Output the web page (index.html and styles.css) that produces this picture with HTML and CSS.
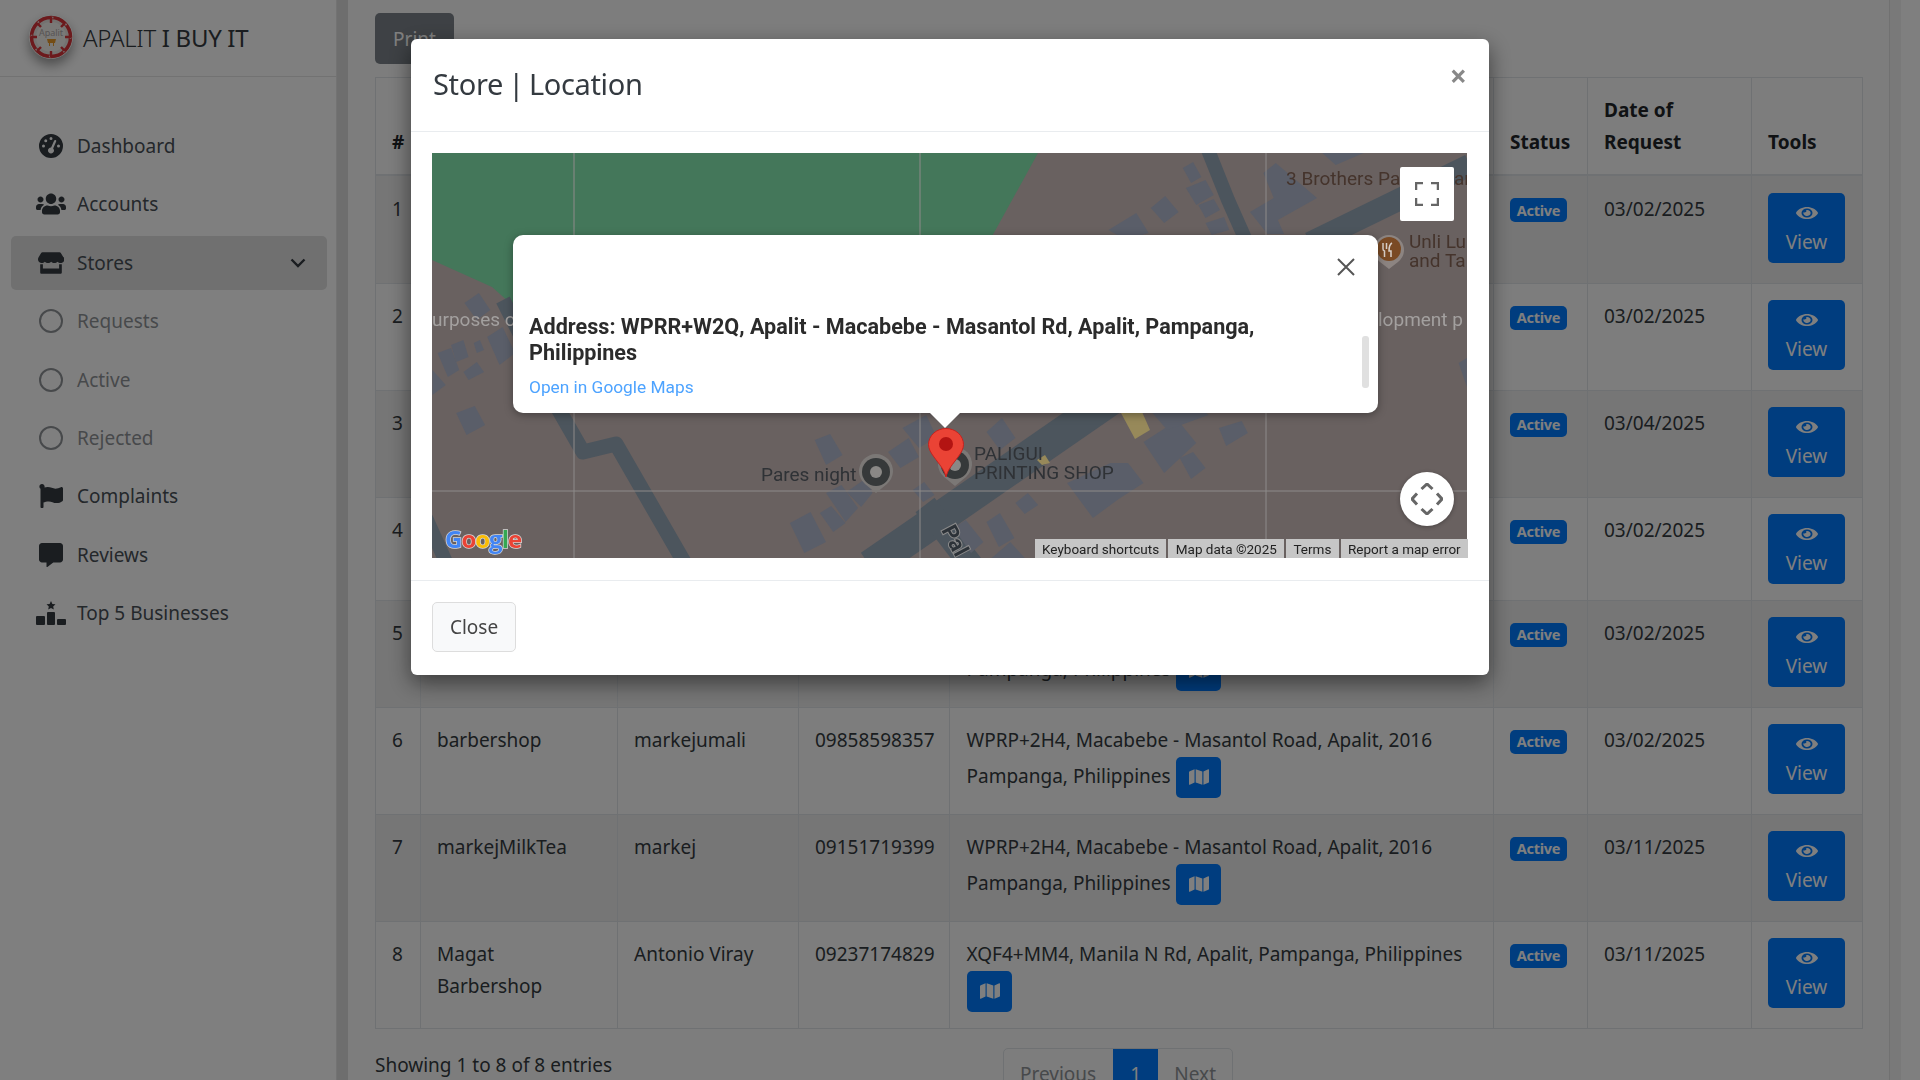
FILE: index.html
```html
<!DOCTYPE html>
<html lang="en">
<head>
  <meta charset="UTF-8">
  <meta name="viewport" content="width=device-width, initial-scale=1.0">
  <title>Stores | Active</title>
  <link rel="stylesheet" href="styles.css">
</head>
<body>

  <div class="app">
    <aside class="sidebar">
      <div class="brand">
        <svg class="brand-logo" viewBox="0 0 44 44">
          <circle cx="22" cy="22" r="21.5" fill="#e8e4e0"/>
          <circle cx="22" cy="22" r="19.5" fill="none" stroke="#d8353a" stroke-width="3.5"/>
          <circle cx="22" cy="22" r="19.5" fill="none" stroke="#e8e4e0" stroke-width="1.6" stroke-dasharray="2 13.3"/>
          <circle cx="22" cy="22" r="15" fill="#f4f2ef"/>
          <path d="M22 2v6M22 36v6M2 22h6M36 22h6M8 8l4 4M32 32l4 4M36 8l-4 4M12 32l-4 4" stroke="#d8353a" stroke-width="2.4"/>
          <text x="22" y="21" class="brand-logo-text">Apalit</text>
          <path d="M18 24h9l-1 4h-7zM20 28h1v3h-1zM24 28h1v3h-1z" fill="#e89a2a"/>
        </svg>
        <span class="brand-text"><span class="brand-light">APALIT</span> I BUY IT</span>
      </div>

      <nav class="nav">
        <a class="nav-item">
          <span class="nav-icon"><svg width="24" height="24" viewBox="0 0 512 512"><path d="M0 256a256 256 0 1 1 512 0A256 256 0 1 1 0 256zM288 96a32 32 0 1 0 -64 0 32 32 0 1 0 64 0zM256 416c35.3 0 64-28.7 64-64c0-17.4-6.9-33.1-18.1-44.6L366 161.7c5.3-12.1-.2-26.3-12.3-31.6s-26.3 .2-31.6 12.3L257.9 288c-.6 0-1.3 0-1.9 0c-35.3 0-64 28.7-64 64s28.7 64 64 64zM176 144a32 32 0 1 0 -64 0 32 32 0 1 0 64 0zM96 288a32 32 0 1 0 0-64 32 32 0 1 0 0 64zm352-32a32 32 0 1 0 -64 0 32 32 0 1 0 64 0z"/></svg></span>
          Dashboard
        </a>
        <a class="nav-item">
          <span class="nav-icon"><svg width="30" height="24" viewBox="0 0 640 512"><path d="M96 224c35.3 0 64-28.7 64-64s-28.7-64-64-64-64 28.7-64 64 28.7 64 64 64zm448 0c35.3 0 64-28.7 64-64s-28.7-64-64-64-64 28.7-64 64 28.7 64 64 64zm32 32h-64c-17.6 0-33.5 7.1-45.1 18.6 40.3 22.1 68.9 62 75.1 109.4h66c17.7 0 32-14.3 32-32v-32c0-35.3-28.7-64-64-64zm-256 0c61.9 0 112-50.1 112-112S381.9 32 320 32 208 82.1 208 144s50.1 112 112 112zm76.8 32h-8.3c-20.8 10-43.9 16-68.5 16s-47.6-6-68.5-16h-8.3C179.6 288 128 339.6 128 403.2V432c0 26.5 21.5 48 48 48h288c26.5 0 48-21.5 48-48v-28.8c0-63.6-51.6-115.2-115.2-115.2zm-223.7-13.4C161.5 263.1 145.6 256 128 256H64c-35.3 0-64 28.7-64 64v32c0 17.7 14.3 32 32 32h65.9c6.3-47.4 34.9-87.3 75.2-109.4z"/></svg></span>
          Accounts
        </a>
        <a class="nav-item active">
          <span class="nav-icon"><svg width="26" height="24" viewBox="0 0 616 512"><path d="M602 118.6L537.1 15C531.3 5.7 521 0 510 0H106C95 0 84.7 5.7 78.9 15L14 118.6c-33.9 54.1-3.9 129.3 59.4 137.9 4.6.6 9.2.9 13.8.9 30.1 0 56.8-13.2 75.1-33.7 18.3 20.5 45.1 33.7 75.1 33.7 30.1 0 56.8-13.2 75.1-33.7 18.3 20.5 45.1 33.7 75.1 33.7 30.1 0 56.8-13.2 75.1-33.7 18.3 20.5 45.1 33.7 75.1 33.7 4.7 0 9.2-.3 13.8-.9 63.3-8.5 93.3-83.7 59.3-137.9zM529.5 288c-10 0-19.9-1.5-29.5-3.8V384H116v-99.8c-9.6 2.2-19.5 3.8-29.5 3.8-6 0-12.1-.4-18-1.2-5.6-.8-11.1-2.1-16.4-3.6V480c0 17.7 14.3 32 32 32h448c17.7 0 32-14.3 32-32V283.2c-5.4 1.6-10.8 2.9-16.4 3.6-6.1.8-12.1 1.2-18.2 1.2z"/></svg></span>
          Stores
          <svg class="nav-caret" width="16" height="10" viewBox="0 0 16 10"><path d="M1.5 1.5L8 8l6.5-6.5" fill="none" stroke="currentColor" stroke-width="2.4"/></svg>
        </a>
        <a class="nav-item sub"><span class="nav-icon"><span class="nav-circle"></span></span>Requests</a>
        <a class="nav-item sub"><span class="nav-icon"><span class="nav-circle"></span></span>Active</a>
        <a class="nav-item sub"><span class="nav-icon"><span class="nav-circle"></span></span>Rejected</a>
        <a class="nav-item">
          <span class="nav-icon"><svg width="24" height="24" viewBox="0 0 512 512"><path d="M349.565 98.783C295.978 98.783 251.721 64 184.348 64c-24.955 0-47.309 4.384-68.045 12.013a55.947 55.947 0 0 0 3.586-23.562C118.117 24.015 94.806 1.206 66.338.048 34.345-1.254 8 24.296 8 56c0 19.026 9.497 35.825 24 45.945V488c0 13.255 10.745 24 24 24h16c13.255 0 24-10.745 24-24v-94.4c28.311-12.064 63.582-22.122 114.435-22.122 53.588 0 97.844 34.783 165.217 34.783 48.169 0 86.667-16.294 122.505-40.858C506.84 359.452 512 349.571 512 339.045v-243.1c0-23.393-24.269-38.87-45.485-29.016-34.338 15.948-76.454 31.854-116.95 31.854z"/></svg></span>
          Complaints
        </a>
        <a class="nav-item">
          <span class="nav-icon"><svg width="24" height="24" viewBox="0 0 512 512"><path d="M448 0H64C28.7 0 0 28.7 0 64v288c0 35.3 28.7 64 64 64h96v84c0 9.8 11.2 15.5 19.1 9.7L304 416h144c35.3 0 64-28.7 64-64V64c0-35.3-28.7-64-64-64z"/></svg></span>
          Reviews
        </a>
        <a class="nav-item">
          <span class="nav-icon"><svg width="30" height="24" viewBox="0 0 30 24"><path d="M15 0l1.4 2.9 3.1.4-2.3 2.2.6 3.1-2.8-1.5-2.8 1.5.6-3.1-2.3-2.2 3.1-.4z"/><rect x="0" y="15" width="9" height="9" rx="1"/><rect x="11" y="11" width="8" height="13" rx="1"/><rect x="21" y="18" width="9" height="6" rx="1"/></svg></span>
          Top 5 Businesses
        </a>
      </nav>
    </aside>

    <main class="content">
      <button class="btn-print">Print</button>

      <table class="data-table">
        <colgroup>
          <col class="col-num"><col class="col-name"><col class="col-owner"><col class="col-contact">
          <col class="col-address"><col class="col-status"><col class="col-date"><col class="col-tools">
        </colgroup>
        <thead>
          <tr>
            <th>#</th><th></th><th></th><th></th><th></th>
            <th>Status</th>
            <th>Date of<br>Request</th>
            <th>Tools</th>
          </tr>
        </thead>
        <tbody>
          <tr class="row-first">
            <td>1</td><td></td><td></td><td></td><td></td>
            <td><span class="badge">Active</span></td>
            <td>03/02/2025</td>
            <td><a class="btn-view"><svg width="22" height="16" viewBox="0 0 576 512" preserveAspectRatio="none"><use href="#eye"/></svg>View</a></td>
          </tr>
          <tr>
            <td>2</td><td></td><td></td><td></td><td></td>
            <td><span class="badge">Active</span></td>
            <td>03/02/2025</td>
            <td><a class="btn-view"><svg width="22" height="16" viewBox="0 0 576 512" preserveAspectRatio="none"><use href="#eye"/></svg>View</a></td>
          </tr>
          <tr>
            <td>3</td><td></td><td></td><td></td><td></td>
            <td><span class="badge">Active</span></td>
            <td>03/04/2025</td>
            <td><a class="btn-view"><svg width="22" height="16" viewBox="0 0 576 512" preserveAspectRatio="none"><use href="#eye"/></svg>View</a></td>
          </tr>
          <tr class="row-short">
            <td>4</td><td></td><td></td><td></td><td></td>
            <td><span class="badge">Active</span></td>
            <td>03/02/2025</td>
            <td><a class="btn-view"><svg width="22" height="16" viewBox="0 0 576 512" preserveAspectRatio="none"><use href="#eye"/></svg>View</a></td>
          </tr>
          <tr>
            <td>5</td><td></td><td></td><td></td>
            <td class="cell-address"><br>Pampanga, Philippines <a class="btn-map"><svg width="20" height="18" viewBox="0 0 576 512"><use href="#map"/></svg></a></td>
            <td><span class="badge">Active</span></td>
            <td>03/02/2025</td>
            <td><a class="btn-view"><svg width="22" height="16" viewBox="0 0 576 512" preserveAspectRatio="none"><use href="#eye"/></svg>View</a></td>
          </tr>
          <tr>
            <td>6</td><td>barbershop</td><td>markejumali</td><td>09858598357</td>
            <td class="cell-address">WPRP+2H4, Macabebe - Masantol Road, Apalit, 2016 Pampanga, Philippines <a class="btn-map"><svg width="20" height="18" viewBox="0 0 576 512"><use href="#map"/></svg></a></td>
            <td><span class="badge">Active</span></td>
            <td>03/02/2025</td>
            <td><a class="btn-view"><svg width="22" height="16" viewBox="0 0 576 512" preserveAspectRatio="none"><use href="#eye"/></svg>View</a></td>
          </tr>
          <tr>
            <td>7</td><td>markejMilkTea</td><td>markej</td><td>09151719399</td>
            <td class="cell-address">WPRP+2H4, Macabebe - Masantol Road, Apalit, 2016 Pampanga, Philippines <a class="btn-map"><svg width="20" height="18" viewBox="0 0 576 512"><use href="#map"/></svg></a></td>
            <td><span class="badge">Active</span></td>
            <td>03/11/2025</td>
            <td><a class="btn-view"><svg width="22" height="16" viewBox="0 0 576 512" preserveAspectRatio="none"><use href="#eye"/></svg>View</a></td>
          </tr>
          <tr>
            <td>8</td><td>Magat<br>Barbershop</td><td>Antonio Viray</td><td>09237174829</td>
            <td class="cell-address">XQF4+MM4, Manila N Rd, Apalit, Pampanga, Philippines <a class="btn-map"><svg width="20" height="18" viewBox="0 0 576 512"><use href="#map"/></svg></a></td>
            <td><span class="badge">Active</span></td>
            <td>03/11/2025</td>
            <td><a class="btn-view"><svg width="22" height="16" viewBox="0 0 576 512" preserveAspectRatio="none"><use href="#eye"/></svg>View</a></td>
          </tr>
        </tbody>
      </table>

      <div class="table-foot">
        <div class="table-info">Showing 1 to 8 of 8 entries</div>
        <div class="pager">
          <a class="page-link page-prev">Previous</a>
          <a class="page-link current">1</a>
          <a class="page-link">Next</a>
        </div>
      </div>
    </main>

    <div class="right-edge"></div>
  </div>

  <!-- shared icons -->
  <svg class="icon-defs" width="0" height="0">
    <defs>
      <path id="eye" d="M572.52 241.4C518.29 135.59 410.93 64 288 64S57.68 135.64 3.48 241.41a32.35 32.35 0 0 0 0 29.19C57.71 376.41 165.07 448 288 448s230.32-71.64 284.52-177.41a32.35 32.35 0 0 0 0-29.19zM288 400a144 144 0 1 1 144-144 143.93 143.93 0 0 1-144 144zm0-240a95.31 95.31 0 0 0-25.31 3.79 47.85 47.85 0 0 1-66.9 66.9A95.78 95.78 0 1 0 288 160z"/>
      <path id="map" d="M0 117.66v346.32c0 11.32 11.43 19.06 21.94 14.86L160 416V32L20.12 87.95A32.006 32.006 0 0 0 0 117.66zM192 416l192 64V96L192 32v384zM554.06 33.16L416 96v384l139.88-55.95A31.996 31.996 0 0 0 576 394.34V48.02c0-11.32-11.43-19.06-21.94-14.86z"/>
    </defs>
  </svg>

  <div class="backdrop"></div>

  <div class="modal">
    <div class="modal-header">
      <h4 class="modal-title">Store | Location</h4>
      <span class="modal-x">×</span>
    </div>

    <div class="modal-body">
      <div class="map">
        <!-- viewBox uses page coordinates so shapes are easy to line up -->
        <svg class="map-art" width="1035" height="405" viewBox="432 153 1035 405">
          <rect x="432" y="153" width="1035" height="405" fill="#696160"/>
          <polygon points="432,153 1038,153 990,240 945,300 520,312 492,287 432,260" fill="#44775a"/>

          <g class="roads">
            <path d="M1208 150L1228 200L1248 245" stroke-width="14"/>
            <path d="M1310 243L1470 165" stroke-width="22"/>
            <path d="M503 300L556 405L583 452L616 444L684 562" stroke-width="15"/>
            <path d="M426 518L446 562" stroke-width="14"/>
            <path d="M870 566L1110 400" stroke-width="32"/>
            <path d="M925 505L972 566" stroke-width="24"/>
          </g>

          <g class="buildings" transform="translate(-13.9 0) scale(1.0331 1)">
            <polygon points="463,303 477,293 488,310 475,320"/>
            <polygon points="437,353 450,348 458,370 447,377"/>
            <polygon points="450,345 462,340 467,357 455,362"/>
            <polygon points="472,343 478,340 482,350 475,353"/>
            <polygon points="462,372 475,362 482,372 467,380"/>
            <polygon points="485,337 500,327 512,353 497,365"/>
            <polygon points="432,370 445,385 432,395"/>
            <polygon points="455,413 473,406 483,425 465,435"/>
            <polygon points="802,440 817,434 829,455 813,465"/>
            <polygon points="778,523 798,512 813,542 792,553"/>
            <polygon points="807,513 818,506 832,523 820,532"/>
            <polygon points="813,493 828,485 844,508 832,522"/>
            <polygon points="833,492 852,478 858,493 847,507"/>
            <polygon points="873,452 893,438 903,457 885,468"/>
            <polygon points="887,428 910,415 920,437 903,448"/>
            <polygon points="897,490 908,482 918,495 907,502"/>
          </g>
          <g class="buildings" transform="translate(-31.1 0) scale(1.0331 1)">
            <polygon points="985,432 1000,418 1013,438 998,450"/>
            <polygon points="1137,442 1170,420 1188,443 1157,473"/>
            <polygon points="1172,458 1185,452 1197,468 1183,479"/>
            <polygon points="1210,428 1232,421 1238,433 1217,446"/>
            <polygon points="1063,483 1105,463 1122,463 1137,483 1113,499 1088,518"/>
            <polygon points="1013,503 1025,493 1035,505 1022,514"/>
            <polygon points="985,522 998,513 1012,538 997,547"/>
            <polygon points="953,528 965,520 982,542 970,553"/>
            <polygon points="990,558 1008,542 1022,558"/>
            <polygon points="1143,410 1180,397 1200,415 1160,430"/>
            <polygon points="1175,168 1185,162 1193,177 1183,183"/>
            <polygon points="1178,188 1197,180 1205,195 1188,205"/>
            <polygon points="1144,208 1158,196 1171,212 1157,223"/>
            <polygon points="1190,205 1205,199 1211,210 1197,218"/>
            <polygon points="1103,230 1130,213 1142,233 1120,240"/>
            <polygon points="1197,223 1215,217 1220,230 1203,235"/>
            <polygon points="1253,173 1265,163 1305,198 1267,220 1273,234 1257,234 1240,212 1263,198"/>
            <polygon points="1310,153 1350,153 1323,165"/>
            <polygon points="1442,363 1450,358 1450,387"/>
          </g>
          <polygon points="1121,413 1139,405 1150,430 1135,439" fill="#97895a"/>
          <polygon points="1037,460 1045,455 1050,463 1042,465" fill="#97895a"/>

          <g class="grid-lines">
            <path d="M574 153V558M920 153V558M1266 153V558M432 491H1467"/>
          </g>

          <text x="432" y="326" class="map-label light">urposes of</text>
          <text x="1378" y="326" class="map-label light">lopment p</text>
          <text x="1286" y="185" class="map-label brown">3 Brothers Pa</text>
          <text x="1454" y="185" class="map-label brown">an</text>
          <text x="1409" y="248" class="map-label brown">Unli Lu</text>
          <text x="1409" y="267" class="map-label brown">and Ta</text>
          <text x="761" y="481" class="map-label dark">Pares night</text>
          <text x="974" y="460" class="map-label dark">PALIGUI</text>
          <text x="974" y="479" class="map-label dark">PRINTING SHOP</text>
          <text x="941" y="530" class="map-label road-name" transform="rotate(62 941 530)">Pal</text>

          <!-- POI pins -->
          <path d="M1389 269l-9-7a15 15 0 1 1 18 0z" fill="#8c8481"/>
          <circle cx="1389" cy="249" r="12" fill="#7a4a24"/>
          <path d="M1383 243v6a2 2 0 0 0 1.500 2v6M1386.500 243v6M1392 243c-2 1-3 4-3 8h2v6" fill="none" stroke="#d8cfc8" stroke-width="1.500"/>

          <path d="M876 493l-11-9a17 17 0 1 1 22 0z" fill="#7b7876"/>
          <circle cx="876" cy="472" r="14" fill="#36393a"/>
          <circle cx="876" cy="472" r="6" fill="#8a8886"/>

          <path d="M955 486l-11-9a17 17 0 1 1 22 0z" fill="#7b7876"/>
          <circle cx="955" cy="465" r="14" fill="#36393a"/>
          <circle cx="955" cy="465" r="6" fill="#8a8886"/>

          <!-- red marker -->
          <path d="M946 477c-2-8-7-13-12-20-3-4-5.500-8-5.500-12.500a17.500 16 0 0 1 35 0c0 4.500-2.500 8.500-5.500 12.500-5 7-10 12-12 20z" fill="#ea4335" stroke="#c5221f" stroke-width="1"/>
          <circle cx="946" cy="444" r="7" fill="#b31412"/>

          <text x="445" y="548" class="google-logo"><tspan fill="#4285f4">G</tspan><tspan fill="#ea4335">o</tspan><tspan fill="#fbbc05">o</tspan><tspan fill="#4285f4">g</tspan><tspan fill="#34a853">l</tspan><tspan fill="#ea4335">e</tspan></text>
        </svg>

        <div class="map-fullscreen">
          <svg width="24" height="24" viewBox="0 0 24 24"><path d="M1 8V1h7M16 1h7v7M23 16v7h-7M8 23H1v-7" fill="none" stroke="#666" stroke-width="2.500"/></svg>
        </div>

        <div class="map-pan">
          <svg width="32" height="32" viewBox="0 0 32 32"><path d="M10.500 6L16 1l5.500 5M10.500 26l5.500 5 5.500-5M6 10.500L1 16l5 5.500M26 10.500l5 5.500-5 5.500" fill="none" stroke="#666" stroke-width="3"/></svg>
        </div>

        <div class="map-attrib">
          <span>Keyboard shortcuts</span>
          <span>Map data ©2025</span>
          <span>Terms</span>
          <span>Report a map error</span>
        </div>

        <div class="info-window">
          <svg class="info-close" width="18" height="18" viewBox="0 0 18 18"><path d="M1 1l16 16M17 1L1 17" stroke="#555" stroke-width="2"/></svg>
          <div class="info-address">Address: WPRR+W2Q, Apalit - Macabebe - Masantol Rd, Apalit, Pampanga, Philippines</div>
          <a class="info-link">Open in Google Maps</a>
          <div class="info-scroll"></div>
        </div>
      </div>
    </div>

    <div class="modal-footer">
      <button class="btn-close">Close</button>
    </div>
  </div>

</body>
</html>
```

FILE: styles.css
```css
* {
  box-sizing: border-box;
}

html, body {
  margin: 0;
  height: 100%;
  overflow: hidden;
}

body {
  font-family: "Noto Sans", Arial, sans-serif;
  font-size: 19px;
  line-height: 32px;
  color: #343a40;
  background: #fafafa;
}

a {
  color: inherit;
  text-decoration: none;
}

button {
  font: inherit;
}

.app {
  display: flex;
  height: 100vh;
}

/* sidebar */
.sidebar {
  flex: 0 0 348px;
  background: #fff;
  border-right: 11px solid #dcdcdc;
  box-shadow: inset -1px 0 0 #e6e6e6;
}

.brand {
  display: flex;
  align-items: center;
  height: 77px;
  padding: 0 0 3px 29px;
  border-bottom: 1px solid #e4e4e4;
}

.brand-logo {
  width: 44px;
  height: 44px;
  border-radius: 50%;
  box-shadow: 0 6px 12px rgba(0, 0, 0, 0.4);
}

.brand-logo-text {
  font-family: "Noto Sans", sans-serif;
  font-size: 9px;
  text-anchor: middle;
  fill: #b0a8a8;
}

.brand-text {
  margin: 2px 0 0 10px;
  font-size: 24px;
  letter-spacing: -0.3px;
  color: #343a40;
}

.brand-light {
  font-weight: 300;
}

.nav {
  padding: 42px 10px 0 11px;
}

.nav-item {
  display: flex;
  align-items: center;
  height: 54px;
  margin-bottom: 4.4px;
  padding: 0 21px 0 0;
  border-radius: 5px;
  color: #495057;
}

.nav-item.active {
  background: rgba(0, 0, 0, 0.12);
}

.nav-item.sub {
  color: #8f9397;
}

.nav-icon {
  flex: 0 0 66px;
  display: flex;
  justify-content: center;
  align-items: center;
  padding-left: 14px;
}

.nav-icon svg {
  fill: #343a40;
}

.nav-circle {
  width: 24px;
  height: 24px;
  border: 2.5px solid #8f9397;
  border-radius: 50%;
}

.nav-caret {
  margin-left: auto;
  color: #343a40;
}

/* main area */
.content {
  flex: 1;
  min-width: 0;
  padding: 13px 27px 0;
}

.right-edge {
  flex: 0 0 31px;
  background: #fff;
  border-left: 1px solid #e2e2e2;
  box-shadow: inset 11px 0 0 #f2f2f2;
}

.btn-print {
  display: block;
  width: 79px;
  height: 51px;
  margin-bottom: 13px;
  border: 0;
  border-radius: 5px;
  background: #7c838a;
  color: #fff;
}

.data-table {
  width: 100%;
  table-layout: fixed;
  border-collapse: collapse;
}

.col-num { width: 45px; }
.col-name { width: 197px; }
.col-owner { width: 181px; }
.col-contact { width: 151px; }
.col-address { width: 544px; }
.col-status { width: 94px; }
.col-date { width: 164px; }
.col-tools { width: 111px; }

.data-table th,
.data-table td {
  border: 1px solid #dee2e6;
  padding: 16px 16px 0;
  vertical-align: top;
  text-align: left;
}

.data-table th {
  height: 97.5px;
  padding-bottom: 16px;
  vertical-align: bottom;
  border-bottom-width: 2px;
  color: #212529;
  font-weight: 700;
}

.data-table td {
  height: 107px;
}

.data-table tbody tr:nth-child(odd) {
  background: rgba(0, 0, 0, 0.05);
}

.data-table .row-first td {
  height: 108px;
  padding-top: 17px;
}

.data-table .row-short td {
  height: 103px;
}

.data-table .cell-address {
  line-height: 33px;
  padding: 16px 16px 0 16.5px;
}

.badge {
  display: inline-flex;
  align-items: center;
  justify-content: center;
  width: 57px;
  height: 24px;
  margin-top: 6px;
  vertical-align: top;
  border-radius: 5px;
  background: #007bff;
  color: #fff;
  font-size: 14.5px;
  font-weight: 700;
  letter-spacing: -0.3px;
  line-height: 1;
}

.row-first .badge {
  margin-top: 5px;
}

.btn-view {
  display: flex;
  flex-direction: column;
  align-items: center;
  width: 77px;
  height: 70px;
  padding-top: 12px;
  border-radius: 5px;
  background: #007bff;
  color: #fff;
  line-height: 30px;
}

.btn-view svg {
  margin-bottom: 6px;
}

.btn-map {
  display: inline-flex;
  align-items: center;
  justify-content: center;
  width: 45px;
  height: 41px;
  margin-left: 0.5px;
  vertical-align: middle;
  border-radius: 5px;
  background: #007bff;
}

.btn-map svg,
.btn-view svg {
  fill: #fff;
}

.table-foot {
  display: grid;
  grid-template-columns: 628px auto;
  margin-top: 20.5px;
}

.pager {
  display: flex;
  width: 230px;
  margin-top: -1px;
  border: 1px solid #dee2e6;
  border-radius: 5px;
  overflow: hidden;
}

.page-link {
  height: 50px;
  padding: 9px 16px;
  color: #8f9397;
}

.page-prev {
  width: 112px;
}

.page-link.current {
  width: 46px;
  background: #007bff;
  color: #fff;
  text-align: center;
}

.icon-defs {
  position: absolute;
}

/* modal */
.backdrop {
  position: fixed;
  inset: 0;
  background: rgba(0, 0, 0, 0.5);
}

.modal {
  position: fixed;
  top: 39px;
  left: 411px;
  width: 1078px;
  border-radius: 6px;
  background: #fff;
  box-shadow: 0 8px 22px rgba(0, 0, 0, 0.5);
}

.modal-header {
  display: flex;
  justify-content: space-between;
  height: 93px;
  padding: 0 22px;
  border-bottom: 1px solid #e9ecef;
}

.modal-title {
  margin: 0;
  padding-top: 26px;
  font-size: 29px;
  font-weight: 400;
  letter-spacing: -0.35px;
  word-spacing: -2px;
  line-height: 38px;
  color: #343a40;
}

.modal-x {
  padding-top: 19px;
  font-size: 30px;
  font-weight: 700;
  line-height: 36px;
  color: #888;
}

.modal-body {
  padding: 21px 21px 22px;
}

.map {
  position: relative;
  height: 405px;
  overflow: hidden;
  font-family: Roboto, Arial, sans-serif;
}

.map-art {
  display: block;
}

.roads path {
  fill: none;
  stroke: #4c555d;
  stroke-linejoin: round;
}

.buildings polygon {
  fill: #5a5e69;
}

.grid-lines path {
  fill: none;
  stroke: #8e8b8a;
  stroke-width: 1;
}

.map-label {
  font-family: Roboto, Arial, sans-serif;
  font-size: 19px;
}

.map-label.light { fill: #a3a09f; }
.map-label.brown { fill: #45342c; }
.map-label.dark { fill: #2f3236; }

.map-label.road-name {
  fill: #2c3238;
  font-size: 22px;
  font-weight: 700;
  stroke: #8a8a8a;
  stroke-width: 2px;
  paint-order: stroke;
}

.google-logo {
  font-family: "Open Sans", sans-serif;
  font-size: 24px;
  font-weight: 700;
  letter-spacing: -1px;
  stroke: #d8d8d8;
  stroke-width: 1.5px;
  paint-order: stroke;
}

.map-fullscreen {
  position: absolute;
  top: 14px;
  right: 14px;
  width: 54px;
  height: 54px;
  display: flex;
  align-items: center;
  justify-content: center;
  border-radius: 2px;
  background: #fff;
}

.map-pan {
  position: absolute;
  top: 319px;
  right: 14px;
  width: 54px;
  height: 54px;
  display: flex;
  align-items: center;
  justify-content: center;
  border-radius: 50%;
  background: #fff;
  box-shadow: 0 1px 4px rgba(0, 0, 0, 0.3);
}

.map-attrib {
  position: absolute;
  right: 0;
  bottom: 0;
  display: flex;
  gap: 2px;
  font-size: 13.5px;
  line-height: 18px;
  color: #222;
}

.map-attrib span {
  padding: 1px 7.3px 0;
  background: #c6c6c6;
}

.info-window {
  position: absolute;
  top: 82px;
  left: 81px;
  width: 865px;
  height: 178px;
  padding: 79px 16px 0;
  border-radius: 10px;
  background: #fff;
  box-shadow: 0 2px 8px rgba(0, 0, 0, 0.35);
}

.info-window::after {
  content: "";
  position: absolute;
  left: 417px;
  bottom: -15px;
  border-left: 15px solid transparent;
  border-right: 15px solid transparent;
  border-top: 15px solid #fff;
}

.info-close {
  position: absolute;
  top: 23px;
  right: 23px;
}

.info-address {
  width: 780px;
  font-size: 21.6px;
  font-weight: 700;
  line-height: 26px;
  color: #2b2b2b;
}

.info-link {
  display: block;
  margin-top: 9px;
  font-size: 17.3px;
  line-height: 24px;
  color: #4da3ff;
}

.info-scroll {
  position: absolute;
  top: 101px;
  right: 9px;
  width: 7px;
  height: 52px;
  border-radius: 3px;
  background: #e0e0e0;
}

.modal-footer {
  height: 95px;
  padding: 21px;
  border-top: 1px solid #e9ecef;
}

.btn-close {
  width: 84px;
  height: 50px;
  border: 1px solid #ddd;
  border-radius: 5px;
  background: #f8f9fa;
  color: #444;
}
```
